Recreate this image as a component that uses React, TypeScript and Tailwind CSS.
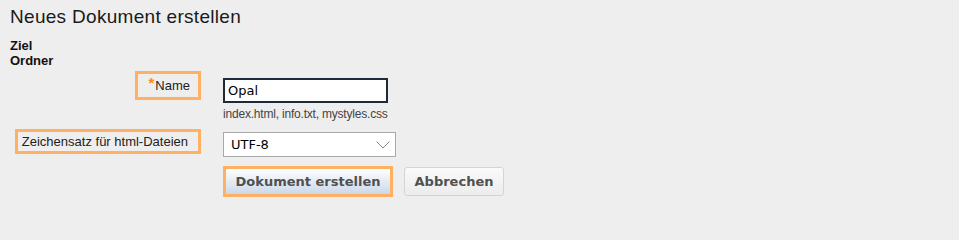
const sans = "font-['Liberation_Sans',Arial,sans-serif]";
const wide = "font-['DejaVu_Sans',Verdana,sans-serif]";

export default function App() {
  return (
    <div className={`min-h-screen w-full bg-[#eeeeee] pl-[10px] pt-[6px] text-[#222] ${sans}`}>
      <h1 className="text-[19px] leading-[22px] tracking-[0.3px] text-[#1a1a1a]">Neues Dokument erstellen</h1>

      <div className="mt-[10px] text-[13px] font-bold leading-[15px] text-[#111]">
        <div>Ziel</div>
        <div>Ordner</div>
      </div>

      {/* Name */}
      <div className="mt-[3px] flex items-start">
        <div className="flex w-[191px] justify-end">
          <div className="flex h-[29px] items-center border-[3px] border-[#ffb062] pl-[10px] pr-[8px] text-[13px]">
            <span className="mb-[7px] mr-[1px] text-[15px] font-bold leading-none text-[#f39020]">*</span>
            <span>Name</span>
          </div>
        </div>
        <div className="ml-[22px] mt-[7px] flex flex-col">
          <input
            defaultValue="Opal"
            className={`h-[25px] w-[165px] border-2 border-[#1d2a3a] bg-white px-[3px] text-[13px] text-black outline-none ${wide}`}
          />
          <span className="mt-[5px] text-[12px] leading-[13px] tracking-[-0.2px] text-[#444]">
            index.html, info.txt, mystyles.css
          </span>
        </div>
      </div>

      {/* Zeichensatz */}
      <div className="mt-[8px] flex items-start">
        <div className="flex w-[191px] justify-end">
          <div className="flex h-[25px] items-center border-[3px] border-[#ffb062] pl-[4px] pr-[10px] text-[13px]">
            Zeichensatz für html-Dateien
          </div>
        </div>
        <div className="ml-[22px] mt-[3px]">
          <div className="flex h-[25px] w-[173px] items-center justify-between border border-[#a9a9a9] bg-white pl-[7px] pr-[5px]">
            <span className={`text-[13px] text-black ${wide}`}>UTF-8</span>
            <svg width="14" height="8" viewBox="0 0 14 8" fill="none" className="mt-[1px]">
              <polyline points="0.5,0.5 7,7 13.5,0.5" stroke="#8a8a8a" strokeWidth="1" />
            </svg>
          </div>
        </div>
      </div>

      {/* Buttons */}
      <div className="ml-[213px] mt-[9px] flex items-start gap-[11px]">
        <div className="border-[3px] border-[#ffb062]">
          <button
            className={`h-[25px] w-[164px] bg-gradient-to-b from-white to-[#cbd8ea] text-[13px] font-bold text-[#505050] ${wide}`}
          >
            Dokument erstellen
          </button>
        </div>
        <button
          className={`mt-[1px] h-[29px] w-[100px] rounded-[3px] border border-[#d4d4d4] bg-gradient-to-b from-[#fafafa] to-[#ececec] text-[13px] font-bold text-[#505050] ${wide}`}
        >
          Abbrechen
        </button>
      </div>
    </div>
  );
}
